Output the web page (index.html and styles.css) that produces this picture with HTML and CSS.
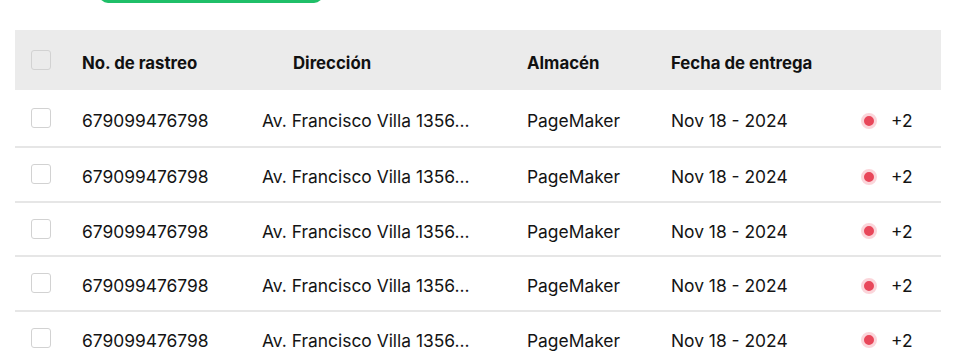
FILE: index.html
```html
<!DOCTYPE html>
<html lang="es">
<head>
<meta charset="utf-8">
<link rel="stylesheet" href="styles.css">
</head>
<body>
<div class="page">
  <div class="btn-wrap"><div class="btn-green"></div></div>
  <div class="table">
    <div class="row head">
      <div class="cell"><span class="check"></span></div>
      <div class="cell">No. de rastreo</div>
      <div class="cell dir-head">Dirección</div>
      <div class="cell">Almacén</div>
      <div class="cell">Fecha de entrega</div>
      <div class="cell"></div>
    </div>
    <div class="row body first">
      <div class="cell"><span class="check"></span></div>
      <div class="cell">679099476798</div>
      <div class="cell">Av. Francisco Villa 1356...</div>
      <div class="cell">PageMaker</div>
      <div class="cell">Nov 18 - 2024</div>
      <div class="cell tags"><span class="dot"></span><span class="more">+2</span></div>
    </div>
    <div class="row body">
      <div class="cell"><span class="check"></span></div>
      <div class="cell">679099476798</div>
      <div class="cell">Av. Francisco Villa 1356...</div>
      <div class="cell">PageMaker</div>
      <div class="cell">Nov 18 - 2024</div>
      <div class="cell tags"><span class="dot"></span><span class="more">+2</span></div>
    </div>
    <div class="row body">
      <div class="cell"><span class="check"></span></div>
      <div class="cell">679099476798</div>
      <div class="cell">Av. Francisco Villa 1356...</div>
      <div class="cell">PageMaker</div>
      <div class="cell">Nov 18 - 2024</div>
      <div class="cell tags"><span class="dot"></span><span class="more">+2</span></div>
    </div>
    <div class="row body">
      <div class="cell"><span class="check"></span></div>
      <div class="cell">679099476798</div>
      <div class="cell">Av. Francisco Villa 1356...</div>
      <div class="cell">PageMaker</div>
      <div class="cell">Nov 18 - 2024</div>
      <div class="cell tags"><span class="dot"></span><span class="more">+2</span></div>
    </div>
    <div class="row body">
      <div class="cell"><span class="check"></span></div>
      <div class="cell">679099476798</div>
      <div class="cell">Av. Francisco Villa 1356...</div>
      <div class="cell">PageMaker</div>
      <div class="cell">Nov 18 - 2024</div>
      <div class="cell tags"><span class="dot"></span><span class="more">+2</span></div>
    </div>
  </div>
</div>
</body>
</html>
```

FILE: styles.css
```css
* { box-sizing: border-box; }
html, body { margin: 0; padding: 0; background: #fff; overflow: hidden; }
body {
  font-family: "Inter", "Noto Sans", sans-serif;
  color: #141414;
}
.page {
  width: 958px;
  height: 364px;
  padding: 0 17px 0 15px;
}
.btn-wrap {
  display: flow-root;
  height: 30px;
  overflow: hidden;
  padding-left: 84px;
}
.btn-green {
  width: 224px;
  height: 40px;
  margin-top: -37px;
  background: #1fbf68;
  border-radius: 9px;
}
.table {
  width: 926px;
}
.row {
  display: grid;
  grid-template-columns: 67px 180px 265px 144px 190px 80px;
  align-items: center;
}
.head {
  height: 60px;
  background: #ebebeb;
  font-weight: 700;
  font-size: 16.8px;
  color: #111;
}
.body {
  height: 54.5px;
  border-bottom: 2px solid #e6e6e6;
  font-size: 17.4px;
  font-weight: 400;
}
.body.first { height: 58px; }
.cell {
  white-space: nowrap;
}
.cell + .cell { padding-top: 5px; }
.cell:first-child {
  padding-left: 16px;
  display: flex;
  align-items: center;
}
.dir-head { padding-left: 31px; }
.check {
  display: block;
  width: 20px;
  height: 20px;
  border: 1.5px solid #d2d2d2;
  border-radius: 3px;
  background: #fff;
}
.head .check { background: #ebebeb; }
.tags {
  display: flex;
  align-items: center;
  gap: 14px;
}
.dot {
  width: 16px;
  height: 16px;
  border-radius: 50%;
  background: #e8475a;
  border: 3px solid #fbd5da;
}
.more { font-size: 17.4px; }
```
